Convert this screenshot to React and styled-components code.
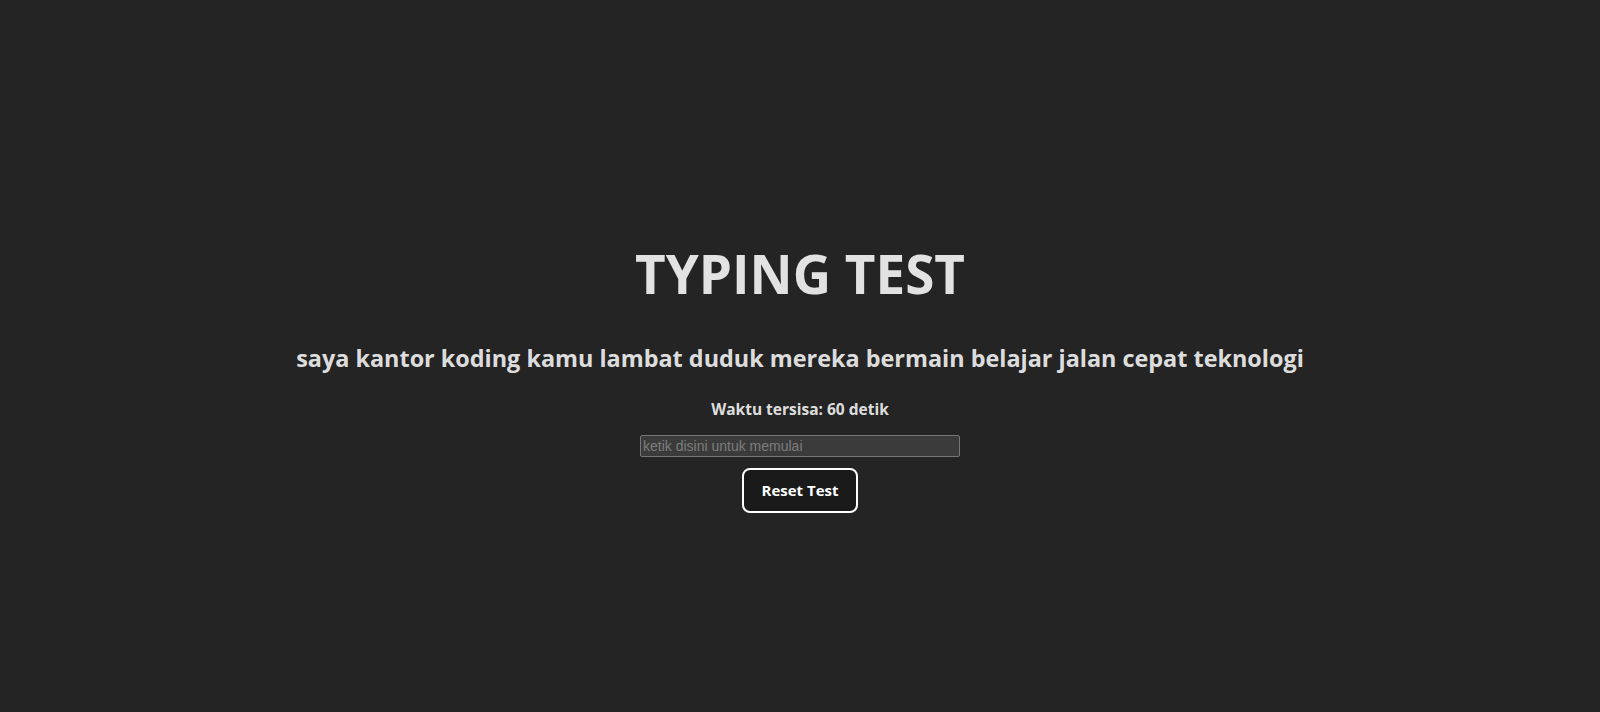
import { useState } from "react"
import styled, { createGlobalStyle } from "styled-components"

const GlobalStyle = createGlobalStyle`
  body {
    margin: 0;
    background: #242424;
    color: rgba(255, 255, 255, 0.87);
    font-family: "Open Sans", "Noto Sans", sans-serif;
  }
`

const Page = styled.div`
  min-height: 100vh;
  display: flex;
  flex-direction: column;
  align-items: center;
  padding-top: 245px;
  box-sizing: border-box;
`

const Title = styled.h1`
  margin: 0;
  font-size: 53px;
  line-height: 1.1;
  font-weight: 700;
`

const Words = styled.h2`
  margin: 41px 0 0;
  font-size: 23.4px;
  font-weight: 700;
  line-height: 1.2;
`

const Timer = styled.p`
  margin: 26px 0 0;
  font-size: 15.5px;
  font-weight: 700;
`

const Input = styled.input`
  margin-top: 15px;
  width: 320px;
  height: 22px;
  box-sizing: border-box;
  background: #3b3b3b;
  border: 1px solid #767676;
  border-radius: 2px;
  color: #ddd;
  font-family: "Liberation Sans", Arial, sans-serif;
  font-size: 14px;
  padding: 1px 2px;
  outline: none;

  &::placeholder {
    color: #7d7d7d;
  }
`

const ResetButton = styled.button`
  margin-top: 11px;
  padding: 11px 17px;
  border: 2px solid #fff;
  border-radius: 8px;
  background: #1a1a1a;
  color: #fff;
  font-family: inherit;
  font-size: 15px;
  font-weight: 700;
  line-height: 1.25;
  cursor: pointer;
`

const App = () => {
  const [text, setText] = useState("")
  return (
    <Page>
      <GlobalStyle />
      <Title>TYPING TEST</Title>
      <Words>saya kantor koding kamu lambat duduk mereka bermain belajar jalan cepat teknologi</Words>
      <Timer>Waktu tersisa: 60 detik</Timer>
      <Input
        value={text}
        onChange={(e) => setText(e.target.value)}
        placeholder="ketik disini untuk memulai"
      />
      <ResetButton onClick={() => setText("")}>Reset Test</ResetButton>
    </Page>
  )
}

export default App
